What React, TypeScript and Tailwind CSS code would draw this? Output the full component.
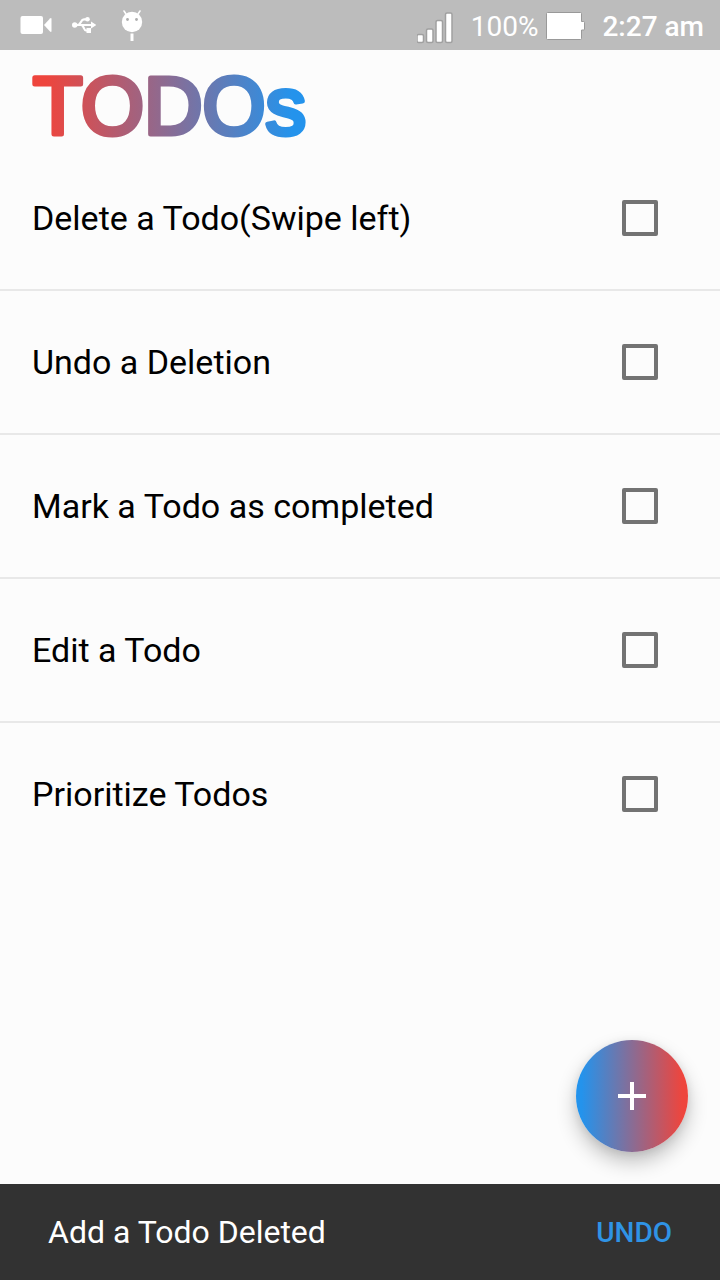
import { useState } from "react";

const todos = [
  "Delete a Todo(Swipe left)",
  "Undo a Deletion",
  "Mark a Todo as completed",
  "Edit a Todo",
  "Prioritize Todos",
];

function StatusBar() {
  return (
    <header className="flex h-[50px] shrink-0 items-center justify-between bg-[#bcbcbc] pr-4 pl-5 text-[28px] leading-8 text-white">
      <div className="flex items-center gap-5">
        <svg className="h-5 w-8" viewBox="0 0 32 20" fill="currentColor" aria-hidden="true">
          <rect x="0.500" y="1" width="22.500" height="18" rx="2" />
          <path d="M24 10 30 3.4Q31.500 2.500 31.500 4V16Q31.500 17.500 30 16.600Z" />
        </svg>
        <svg className="h-5 w-6" viewBox="0 0 24 20" fill="none" stroke="currentColor" strokeWidth="2.2" aria-hidden="true">
          <path d="M2 10H20M5.500 10C9 10 8.500 4.300 12 4.300H15M9 10C12 10 11.500 15.500 14 15.500H17" />
          <circle cx="2.700" cy="10" r="2.700" fill="currentColor" stroke="none" />
          <circle cx="15.500" cy="4.300" r="2.300" fill="currentColor" stroke="none" />
          <path d="M19 6.500 24.500 10 19 13.500ZM14.500 13H19V18H14.500Z" fill="currentColor" stroke="none" />
        </svg>
        <svg className="ml-1 h-8 w-6" viewBox="0 0 24 32" fill="none" aria-hidden="true">
          <path d="M4 2 7 6.500M20 2 17 6.500" stroke="currentColor" strokeWidth="1.600" strokeLinecap="round" />
          <circle cx="12" cy="13" r="10.200" fill="currentColor" />
          <circle cx="7.500" cy="10.500" r="1.400" fill="#adadad" />
          <circle cx="16.500" cy="10.500" r="1.400" fill="#adadad" />
          <path d="M12 24.500V32" stroke="currentColor" strokeWidth="3" />
        </svg>
      </div>
      <div className="flex items-center">
        <svg className="h-[38px] w-[38px]" viewBox="1 0 38 38" fill="white" stroke="#a0a0a0" strokeWidth="1.500" aria-hidden="true">
          <rect x="1" y="28.500" width="6.500" height="8" rx="1.500" />
          <rect x="10.500" y="23" width="6.500" height="13.500" rx="1.500" />
          <rect x="20" y="14.500" width="6.500" height="22" rx="1.500" />
          <rect x="29.500" y="7" width="6.500" height="29.500" rx="1.500" />
        </svg>
        <span className="ml-4 pt-1">100%</span>
        <svg className="ml-2 h-[30px] w-10" viewBox="0 0 40 30" fill="white" stroke="#999999" aria-hidden="true">
          <path transform="translate(0 2)" d="M1.500.5H34.500Q35.500.5 35.500 1.500V9.500H37.500Q38.500 9.500 38.500 10.500V17Q38.500 18 37.500 18H35.500V26.500Q35.500 27.500 34.500 27.500H1.500Q.5 27.500.5 26.500V1.500Q.5.5 1.500.5Z" />
        </svg>
        <span className="ml-4 pt-1 font-medium">2:27 am</span>
      </div>
    </header>
  );
}

function Title() {
  return (
    <h1 className="h-[97px] shrink-0 px-8">
      <svg className="h-24 w-[280px] overflow-visible" viewBox="0 0 280 96">
        <defs>
          <linearGradient id="title-fill" gradientUnits="userSpaceOnUse" x1="0" y1="0" x2="274" y2="0">
            <stop offset="0.05" stopColor="#ee453d" />
            <stop offset="0.95" stopColor="#2493ec" />
          </linearGradient>
        </defs>
        <text
          x="1"
          y="84"
          fill="url(#title-fill)"
          stroke="url(#title-fill)"
          strokeWidth="5"
          strokeLinejoin="round"
          className="font-['Liberation_Sans',Arial,sans-serif] text-[81px]"
        >
          TODOs
        </text>
      </svg>
    </h1>
  );
}

export default function App() {
  const [done, setDone] = useState<boolean[]>(todos.map(() => false));
  return (
    <div className="flex min-h-screen flex-col bg-[#fcfcfc] font-[Roboto,sans-serif] text-black">
      <StatusBar />
      <main className="flex grow flex-col">
        <Title />
        <ul className="divide-y-2 divide-[#e8e8e8]">
          {todos.map((todo, i) => (
            <li key={todo}>
              <label className="flex h-[142px] items-center justify-between pr-[62px] pl-8 text-[34px] leading-10">
                <span>{todo}</span>
                <input
                  type="checkbox"
                  checked={done[i]}
                  onChange={() => setDone(done.map((d, j) => (j === i ? !d : d)))}
                  className="size-9 appearance-none rounded-[2px] border-4 border-[#737373] checked:bg-[#2196f3]"
                />
              </label>
            </li>
          ))}
        </ul>
        <button
          type="button"
          aria-label="Add todo"
          className="mt-auto mr-8 mb-8 flex size-28 items-center justify-center self-end rounded-full bg-linear-to-r/srgb from-[#2493ec] from-5% to-[#ee453d] to-95% shadow-[0_10px_20px_rgba(0,0,0,0.24),0_2px_8px_rgba(0,0,0,0.08)]"
        >
          <svg className="size-7" viewBox="0 0 28 28" fill="white" aria-hidden="true">
            <path d="M12 0H16V12H28V16H16V28H12V16H0V12H12Z" />
          </svg>
        </button>
      </main>
      <footer className="flex h-24 shrink-0 items-center justify-between bg-[#323232] px-12 text-white">
        <p className="text-[32px] leading-10">Add a Todo Deleted</p>
        <button type="button" className="pt-0.5 text-[28px] leading-10 font-medium text-[#2f93e5]">
          UNDO
        </button>
      </footer>
    </div>
  );
}
